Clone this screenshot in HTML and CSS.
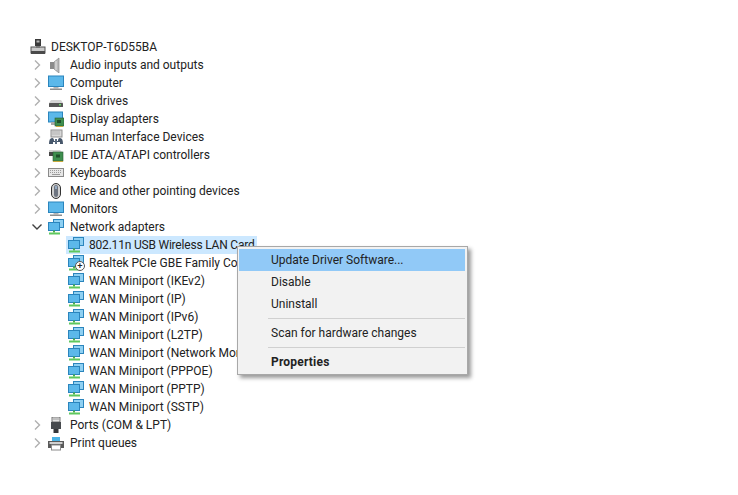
FILE: index.html
```html
<!DOCTYPE html>
<html lang="en">
<head>
<meta charset="utf-8">
<title>Device Manager</title>
<link rel="stylesheet" href="styles.css">
</head>
<body>
<svg class="defs" width="0" height="0" aria-hidden="true">
  <defs>
    <symbol id="i-closed" viewBox="0 0 10 12"><path d="M3 1.500 7.500 6 3 10.500" fill="none" stroke="#b0b0b0" stroke-width="1.400"/></symbol>
    <symbol id="i-open" viewBox="0 0 12 10"><path d="M1.500 2.500 6 7l4.500-4.500" fill="none" stroke="#404040" stroke-width="1.400"/></symbol>
    <symbol id="i-pc" viewBox="0 0 16 16">
      <rect x="5" y="0" width="6" height="7" fill="#3a3a3a"/><rect x="6.500" y="1.500" width="3" height="2" fill="#b5b5b5"/>
      <rect x="1" y="8" width="14" height="6" fill="#c9c9c9" stroke="#555"/><rect x="1" y="12" width="14" height="3" fill="#4a4a4a"/><rect x="6" y="7" width="4" height="2" fill="#777"/>
    </symbol>
    <symbol id="i-audio" viewBox="0 0 16 16">
      <rect x="2" y="5" width="4" height="7" fill="#8b8b8b"/><path d="M6 5 11 1v15L6 12z" fill="#b9b9b9" stroke="#8a8a8a" stroke-width=".7"/><path d="M8 4v9" stroke="#e3e3e3"/>
    </symbol>
    <symbol id="i-monitor" viewBox="0 0 16 16">
      <rect x=".5" y="1" width="15" height="10.500" fill="#5cb8ea" stroke="#2b85bd"/><rect x="5.500" y="12" width="5" height="1.500" fill="#b5b5b5"/><rect x="2" y="13.500" width="12" height="1.500" fill="#8f8f8f"/>
    </symbol>
    <symbol id="i-disk" viewBox="0 0 16 16">
      <path d="M3 7h10l2 3H1z" fill="#d4d4d4"/><rect x="1" y="10" width="14" height="4" rx=".5" fill="#555"/><rect x="11" y="11" width="2" height="1.500" fill="#6bd66b"/>
    </symbol>
    <symbol id="i-display" viewBox="0 0 16 16">
      <rect x=".5" y="1" width="14" height="10" fill="#5cb8ea" stroke="#2b85bd"/><rect x="3" y="11" width="5" height="3" fill="#a9a9a9"/>
      <rect x="7" y="7" width="9" height="8" fill="#3f8f4f" stroke="#2a5c33" stroke-width=".6"/><rect x="9" y="9" width="4" height="3" fill="#1f4f2a"/><path d="M8 15.500h7" stroke="#c9a93e"/>
    </symbol>
    <symbol id="i-hid" viewBox="0 0 16 16">
      <rect x="3" y="1" width="11" height="7" fill="#d8d8d8" stroke="#909090"/><path d="M4.500 3h8M4.500 5h8" stroke="#8f8f8f" stroke-dasharray="1 1"/>
      <path d="M1 15c0-4 1-6 3-6s2 2 2 3h4c0-1 0-3 2-3s3 2 3 6h-3v-2H5v2z" fill="#46566a"/><rect x="7" y="10" width="2" height="5" fill="#5a6c80"/>
    </symbol>
    <symbol id="i-ide" viewBox="0 0 16 16">
      <path d="M1 3h11l2 2H1z" fill="#d2d2d2"/><rect x="1" y="5" width="9" height="4" fill="#474747"/><rect x="5" y="5" width="10" height="9" fill="#3f8f4f" stroke="#2a5c33" stroke-width=".6"/><rect x="8" y="7.500" width="4" height="3" fill="#1f4f2a"/><path d="M5 14.500h10" stroke="#c9a93e"/>
    </symbol>
    <symbol id="i-keyboard" viewBox="0 0 16 16">
      <rect x=".5" y="3.500" width="15" height="8" fill="#e6e6e6" stroke="#8a8a8a"/><path d="M2 5.500h12M2 7.500h12" stroke="#9a9a9a" stroke-dasharray="1 1"/><path d="M4 9.500h8" stroke="#9a9a9a"/>
    </symbol>
    <symbol id="i-mouse" viewBox="0 0 16 16">
      <rect x="3.500" y=".5" width="9" height="15" rx="4.500" fill="#cfcfcf" stroke="#333" stroke-width="1"/><rect x="6" y="2" width="4" height="12" rx="2" fill="#6d7480"/><rect x="7.300" y="3" width="1.400" height="3" fill="#a8c4de"/>
    </symbol>
    <symbol id="i-net" viewBox="0 0 16 16">
      <rect x="5.500" y=".5" width="10" height="8" fill="#8fd0f2" stroke="#2b85bd"/>
      <rect x=".5" y="3.500" width="11" height="8" fill="#5cb8ea" stroke="#2b85bd"/>
      <rect x="5" y="11.500" width="2" height="2" fill="#4cae4c"/><rect x="1" y="13.500" width="11" height="2" fill="#5ec85e"/>
    </symbol>
    <symbol id="i-ports" viewBox="0 0 16 16">
      <rect x="4" y="0" width="8" height="5" fill="#e3e3e3" stroke="#555" stroke-width=".8"/><path d="M5.500 2h5" stroke="#555" stroke-dasharray="1 1"/><rect x="3" y="5" width="10" height="7" fill="#474a4e"/><rect x="5.500" y="12" width="5" height="4" fill="#34373a"/>
    </symbol>
    <symbol id="i-printer" viewBox="0 0 16 16">
      <rect x="4" y="2" width="8" height="4" fill="#4bb3e6"/><rect x="0" y="6" width="16" height="7" fill="#5a5a5a"/><rect x="1.500" y="7" width="13" height="2" fill="#d0d0d0"/><rect x="3.500" y="10" width="9" height="5" fill="#fff" stroke="#8a8a8a"/>
    </symbol>
  </defs>
</svg>

<main class="tree">
  <div class="row root"><svg class="icon"><use href="#i-pc"/></svg><span>DESKTOP-T6D55BA</span></div>
  <div class="row"><svg class="twisty"><use href="#i-closed"/></svg><svg class="icon"><use href="#i-audio"/></svg><span>Audio inputs and outputs</span></div>
  <div class="row"><svg class="twisty"><use href="#i-closed"/></svg><svg class="icon"><use href="#i-monitor"/></svg><span>Computer</span></div>
  <div class="row"><svg class="twisty"><use href="#i-closed"/></svg><svg class="icon"><use href="#i-disk"/></svg><span>Disk drives</span></div>
  <div class="row"><svg class="twisty"><use href="#i-closed"/></svg><svg class="icon"><use href="#i-display"/></svg><span>Display adapters</span></div>
  <div class="row"><svg class="twisty"><use href="#i-closed"/></svg><svg class="icon"><use href="#i-hid"/></svg><span>Human Interface Devices</span></div>
  <div class="row"><svg class="twisty"><use href="#i-closed"/></svg><svg class="icon"><use href="#i-ide"/></svg><span>IDE ATA/ATAPI controllers</span></div>
  <div class="row"><svg class="twisty"><use href="#i-closed"/></svg><svg class="icon"><use href="#i-keyboard"/></svg><span>Keyboards</span></div>
  <div class="row"><svg class="twisty"><use href="#i-closed"/></svg><svg class="icon"><use href="#i-mouse"/></svg><span>Mice and other pointing devices</span></div>
  <div class="row"><svg class="twisty"><use href="#i-closed"/></svg><svg class="icon"><use href="#i-monitor"/></svg><span>Monitors</span></div>
  <div class="row"><svg class="twisty"><use href="#i-open"/></svg><svg class="icon"><use href="#i-net"/></svg><span>Network adapters</span></div>
  <div class="row child selected"><svg class="icon"><use href="#i-net"/></svg><span>802.11n USB Wireless LAN Card</span></div>
  <div class="row child"><span class="badged"><svg class="icon"><use href="#i-net"/></svg><span class="badge">+</span></span><span>Realtek PCIe GBE Family Controller</span></div>
  <div class="row child"><svg class="icon"><use href="#i-net"/></svg><span>WAN Miniport (IKEv2)</span></div>
  <div class="row child"><svg class="icon"><use href="#i-net"/></svg><span>WAN Miniport (IP)</span></div>
  <div class="row child"><svg class="icon"><use href="#i-net"/></svg><span>WAN Miniport (IPv6)</span></div>
  <div class="row child"><svg class="icon"><use href="#i-net"/></svg><span>WAN Miniport (L2TP)</span></div>
  <div class="row child"><svg class="icon"><use href="#i-net"/></svg><span>WAN Miniport (Network Monitor)</span></div>
  <div class="row child"><svg class="icon"><use href="#i-net"/></svg><span>WAN Miniport (PPPOE)</span></div>
  <div class="row child"><svg class="icon"><use href="#i-net"/></svg><span>WAN Miniport (PPTP)</span></div>
  <div class="row child"><svg class="icon"><use href="#i-net"/></svg><span>WAN Miniport (SSTP)</span></div>
  <div class="row"><svg class="twisty"><use href="#i-closed"/></svg><svg class="icon"><use href="#i-ports"/></svg><span>Ports (COM &amp; LPT)</span></div>
  <div class="row"><svg class="twisty"><use href="#i-closed"/></svg><svg class="icon"><use href="#i-printer"/></svg><span>Print queues</span></div>
</main>

<nav class="menu">
  <div class="item active">Update Driver Software...</div>
  <div class="item">Disable</div>
  <div class="item">Uninstall</div>
  <div class="sep"></div>
  <div class="item">Scan for hardware changes</div>
  <div class="sep"></div>
  <div class="item strong">Properties</div>
</nav>
</body>
</html>
```

FILE: styles.css
```css
* { box-sizing: border-box; }
html, body { margin: 0; height: 100%; background: #fff; overflow: hidden; }
body { font-family: Roboto, "Open Sans", "Liberation Sans", sans-serif; font-size: 12px; color: #222; position: relative; }
.defs { position: absolute; }
.tree { padding: 38px 0 0 30px; }
.row { display: flex; align-items: center; height: 18px; white-space: nowrap; }
.twisty { width: 12px; height: 12px; margin: 0 5px 0 1px; flex: none; }
.icon { width: 16px; height: 16px; flex: none; margin-right: 6px; }
.root .icon { margin: 0 5px 0 0; }
.child { margin-left: 36px; padding-left: 2px; }
.child .icon { margin-right: 5px; }
.selected { width: 191px; background: #cce8ff; letter-spacing: -.2px; }
.badged { position: relative; display: flex; }
.badge { position: absolute; left: 7px; top: 6px; width: 10px; height: 10px; border-radius: 50%; background: #fff; border: 1px solid #555; font: bold 9px/8px "Liberation Sans", sans-serif; text-align: center; color: #222; }
.menu { position: absolute; left: 237px; top: 246px; width: 231px; height: 129px; padding: 2px 2px 2px 1px; background: #f2f2f2; border: 1px solid #a8a8a8; box-shadow: 3px 3px 4px rgba(0,0,0,.4); }
.item { height: 22px; line-height: 22px; padding-left: 32px; white-space: nowrap; }
.active { background: #91c9f7; }
.strong { font-weight: 700; letter-spacing: .2px; }
.sep { height: 1px; margin: 3px 0 3px 29px; background: #d0d0d0; }
```
